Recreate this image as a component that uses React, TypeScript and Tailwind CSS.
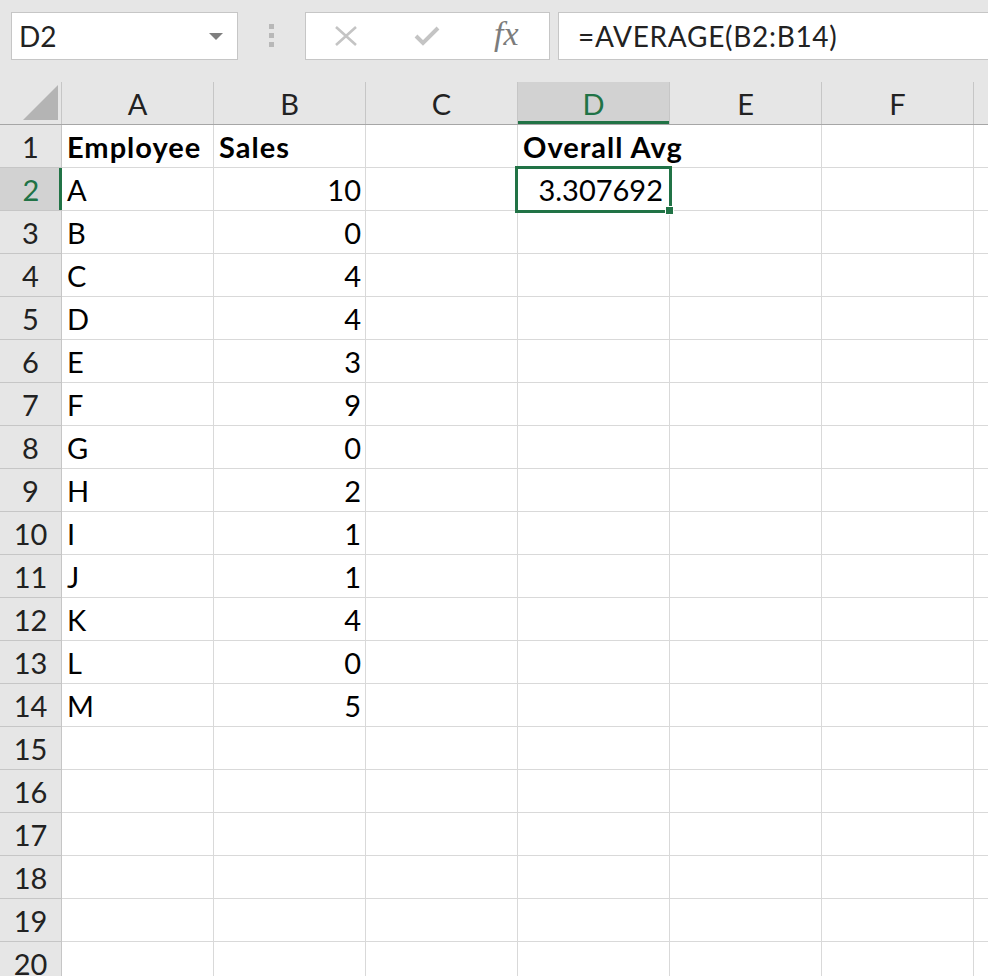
import React from 'react'

type Row = {
  a: string
  b: string
  bold?: boolean
}

const rows: Row[] = [
  { a: 'Employee', b: 'Sales', bold: true },
  { a: 'A', b: '10' },
  { a: 'B', b: '0' },
  { a: 'C', b: '4' },
  { a: 'D', b: '4' },
  { a: 'E', b: '3' },
  { a: 'F', b: '9' },
  { a: 'G', b: '0' },
  { a: 'H', b: '2' },
  { a: 'I', b: '1' },
  { a: 'J', b: '1' },
  { a: 'K', b: '4' },
  { a: 'L', b: '0' },
  { a: 'M', b: '5' },
]

const columns = ['A', 'B', 'C', 'D', 'E', 'F']

function Toolbar() {
  return (
    <div className="h-[82px] bg-[#e6e6e6] flex items-start pt-[12px] pl-[11px]">
      {/* name box */}
      <div className="w-[227px] h-[48px] bg-white border border-[#c6c6c6] flex items-center justify-between pl-[7px] pr-[14px]">
        <span className="text-[28px] text-[#222] leading-none">D2</span>
        <svg width="14" height="7" viewBox="0 0 14 7">
          <polygon points="0,0 14,0 7,7" fill="#7f7f7f" />
        </svg>
      </div>

      {/* grip dots */}
      <div className="ml-[31px] mt-[12px] flex flex-col gap-[4px]">
        <div className="w-[5px] h-[5px] bg-[#b8b8b8]" />
        <div className="w-[5px] h-[5px] bg-[#b8b8b8]" />
        <div className="w-[5px] h-[5px] bg-[#b8b8b8]" />
      </div>

      {/* cancel / enter / fx */}
      <div className="ml-[31px] w-[245px] h-[48px] bg-white border border-[#c6c6c6] flex items-center">
        <svg className="ml-[29px]" width="22" height="20" viewBox="0 0 22 20">
          <path d="M1 1 L21 19 M21 1 L1 19" stroke="#c4c4c4" strokeWidth="2.6" fill="none" />
        </svg>
        <svg className="ml-[57px]" width="26" height="20" viewBox="0 0 26 20">
          <path d="M2 10 L9 17 L24 2" stroke="#c4c4c4" strokeWidth="4" fill="none" strokeLinejoin="miter" />
        </svg>
        <span className="ml-[54px] text-[34px] italic text-[#7c7c7c] leading-none font-['Liberation_Serif',serif] -mt-[4px]">
          fx
        </span>
      </div>

      {/* formula bar */}
      <div className="ml-[8px] flex-1 h-[48px] bg-white border border-[#c6c6c6] border-r-0 flex items-center pl-[19px]">
        <span className="text-[28px] text-[#222] leading-none tracking-[0.7px]">=AVERAGE(B2:B14)</span>
      </div>
    </div>
  )
}

function HeaderRow() {
  return (
    <div className="flex h-[43px] bg-[#e6e6e6] border-b border-[#a6a6a6]">
      <div className="w-[62px] shrink-0 border-r border-[#c6c6c6] relative">
        <svg className="absolute left-[23px] top-[3px]" width="36" height="36" viewBox="0 0 36 36">
          <polygon points="35,0 35,35 0,35" fill="#b4b4b4" />
        </svg>
      </div>
      {columns.map((c) => (
        <div
          key={c}
          className={
            c === 'D'
              ? 'w-[152px] shrink-0 border-r border-[#c6c6c6] bg-[#d2d2d2] text-[#217346] text-center text-[29px] leading-[44px] relative'
              : 'w-[152px] shrink-0 border-r border-[#c6c6c6] text-[#222] text-center text-[29px] leading-[44px]'
          }
        >
          {c}
          {c === 'D' && <div className="absolute left-0 right-0 bottom-0 h-[3px] bg-[#217346]" />}
        </div>
      ))}
      <div className="flex-1" />
    </div>
  )
}

function Cell({
  children,
  align = 'left',
  bold,
  noRight,
}: {
  children?: React.ReactNode
  align?: 'left' | 'right'
  bold?: boolean
  noRight?: boolean
}) {
  return (
    <div
      className={[
        'w-[152px] shrink-0 h-[43px] border-b border-[#d9d9d9] text-[29px] leading-[44px] text-black whitespace-nowrap overflow-visible',
        noRight ? '' : 'border-r',
        align === 'right' ? 'text-right pr-[4px]' : 'text-left pl-[5px]',
        bold ? 'font-bold tracking-[1px]' : '',
      ].join(' ')}
    >
      {children}
    </div>
  )
}

function GridRow({ n, row }: { n: number; row?: Row }) {
  const selected = n === 2
  return (
    <div className="flex h-[43px]">
      <div
        className={
          selected
            ? 'w-[62px] shrink-0 h-[43px] bg-[#d2d2d2] border-b border-[#c6c6c6] text-center text-[29px] leading-[43px] text-[#217346] relative'
            : 'w-[62px] shrink-0 h-[43px] bg-[#e6e6e6] border-b border-r border-[#c6c6c6] text-center text-[29px] leading-[43px] text-[#222]'
        }
      >
        {n}
        {selected && <div className="absolute top-0 bottom-0 right-0 w-[3px] bg-[#217346]" />}
      </div>
      <Cell bold={row?.bold}>{row?.a}</Cell>
      <Cell bold={row?.bold} align={row && !row.bold ? 'right' : 'left'}>
        {row?.b}
      </Cell>
      <Cell />
      {n === 1 ? (
        <Cell bold noRight>
          Overall Avg
        </Cell>
      ) : n === 2 ? (
        <Cell align="right">
          <span className="pr-[2px]">3.307692</span>
        </Cell>
      ) : (
        <Cell />
      )}
      <Cell />
      <Cell />
      <div className="flex-1 h-[43px] border-b border-[#d9d9d9]" />
    </div>
  )
}

export default function App() {
  const lines = Array.from({ length: 20 }, (_, i) => i + 1)
  return (
    <div className="w-[988px] h-[976px] bg-white overflow-hidden relative font-['Lato',sans-serif]">
      <Toolbar />
      <HeaderRow />
      <div>
        {lines.map((n) => (
          <GridRow key={n} n={n} row={rows[n - 1]} />
        ))}
      </div>

      {/* active cell D2 */}
      <div className="absolute left-[515px] top-[166px] w-[157px] h-[47px] border-[3px] border-[#217346] pointer-events-none" />
      <div className="absolute left-[665px] top-[206px] w-[9px] h-[9px] bg-[#217346] border border-white pointer-events-none" />
    </div>
  )
}
